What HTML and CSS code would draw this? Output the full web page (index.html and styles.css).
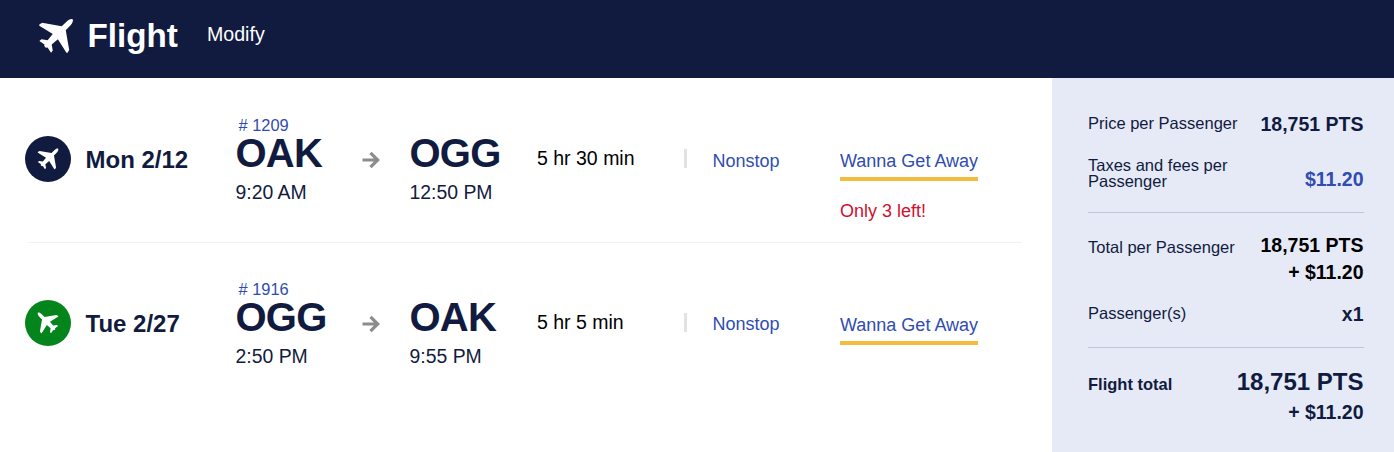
FILE: index.html
```html
<!DOCTYPE html>
<html lang="en">
<head>
    <meta charset="UTF-8">
    <meta name="viewport" content="width=device-width, initial-scale=1.0">
    <title>Flight</title>
    <link rel="stylesheet" href="styles.css">
</head>
<body>
    <svg class="defs" width="0" height="0">
        <symbol id="plane" viewBox="0 0 105 105">
            <path d="M101 4C97 1 89 5 84 10L69 24L12 14L4 19Q2 21 5 23L43 47L28 65L10 62L4 67L19 77L18 82L23 87L28 86L38 101L43 95L40 77L58 62L82 100Q84 103 86 101L91 93L81 36L95 21C100 16 104 8 101 4Z"/>
        </symbol>
        <symbol id="arrow" viewBox="0 0 18 18">
            <path d="M0.5 9H15.5M8.5 1.8L15.7 9L8.5 16.2" fill="none" stroke="#8c8c8c" stroke-width="3.2"/>
        </symbol>
    </svg>
    <header class="header">
        <svg class="header-icon"><use href="#plane"/></svg>
        <h1>Flight</h1>
        <a class="modify">Modify</a>
    </header>
    <main>
        <section class="flights">
            <div class="flight">
                <div class="badge depart"><svg><use href="#plane"/></svg></div>
                <div class="date">Mon 2/12</div>
                <div class="stop">
                    <a class="number"># 1209</a>
                    <div class="code">OAK</div>
                    <div class="time">9:20 AM</div>
                </div>
                <svg class="arrow"><use href="#arrow"/></svg>
                <div class="stop arrive">
                    <div class="code">OGG</div>
                    <div class="time">12:50 PM</div>
                </div>
                <div class="duration">5 hr 30 min</div>
                <a class="nonstop">Nonstop</a>
                <div class="fare">
                    <a class="fare-name">Wanna Get Away</a>
                    <div class="left">Only 3 left!</div>
                </div>
            </div>
            <div class="flight">
                <div class="badge return"><svg><use href="#plane"/></svg></div>
                <div class="date">Tue 2/27</div>
                <div class="stop">
                    <a class="number"># 1916</a>
                    <div class="code">OGG</div>
                    <div class="time">2:50 PM</div>
                </div>
                <svg class="arrow"><use href="#arrow"/></svg>
                <div class="stop arrive">
                    <div class="code">OAK</div>
                    <div class="time">9:55 PM</div>
                </div>
                <div class="duration">5 hr 5 min</div>
                <a class="nonstop">Nonstop</a>
                <div class="fare">
                    <a class="fare-name">Wanna Get Away</a>
                </div>
            </div>
        </section>
        <aside class="price">
            <div class="row">
                <span class="label">Price per Passenger</span>
                <span class="amount">18,751 PTS</span>
            </div>
            <div class="row taxes">
                <span class="label">Taxes and fees per Passenger</span>
                <a class="amount">$11.20</a>
            </div>
            <div class="row total">
                <span class="label">Total per Passenger</span>
                <span class="amount">18,751 PTS<br>+ $11.20</span>
            </div>
            <div class="row passengers">
                <span class="label">Passenger(s)</span>
                <span class="amount">x1</span>
            </div>
            <div class="row flight-total">
                <span class="label">Flight total</span>
                <span class="amount"><span class="big">18,751 PTS</span><br>+ $11.20</span>
            </div>
        </aside>
    </main>
</body>
</html>
```
FILE: styles.css
```css
* {
    box-sizing: border-box;
}
body {
    font-family: "Liberation Sans", Arial, sans-serif;
    margin: 0;
    background-color: #fff;
    color: #111b40;
}
.defs {
    display: block;
}
.header {
    display: flex;
    height: 78px;
    padding: 17px 38px 0;
    background-color: #111b40;
    color: #fff;
}
.header-icon {
    width: 36px;
    height: 36px;
    margin-top: 1px;
    fill: #fff;
}
.header h1 {
    margin: 0 0 0 13.5px;
    width: 119.5px;
    font-size: 33.2px;
    line-height: 38px;
}
.modify {
    font-size: 19.6px;
    line-height: 34px;
}
main {
    display: grid;
    grid-template-columns: 1052px 1fr;
    height: 374px;
}
.flights {
    padding: 0 30px 0 25px;
}
.flight {
    display: grid;
    grid-template-columns: 60.5px 150px 126.5px 47.5px 127.5px 147px 156px 1fr;
    align-items: start;
    height: 165px;
    padding-top: 37px;
    background: linear-gradient(#f2f2f2, #f2f2f2) 3px 100% / 100% 1px no-repeat;
}
.flight + .flight {
    padding-top: 36px;
    background: none;
}
.badge {
    display: flex;
    justify-content: center;
    align-items: center;
    width: 46px;
    height: 46px;
    margin-top: 21px;
    border-radius: 50%;
}
.badge svg {
    width: 22px;
    height: 22px;
    fill: #fff;
}
.depart {
    background-color: #111b40;
}
.return {
    background-color: #04851c;
}
.return svg {
    transform: scaleX(-1);
}
.date {
    margin-top: 31px;
    font-size: 24px;
    font-weight: bold;
    line-height: 28px;
}
.number {
    display: block;
    padding-left: 3px;
    font-size: 16.4px;
    line-height: 20px;
    color: #304cb2;
}
.arrive {
    padding-top: 20px;
}
.code {
    font-size: 40px;
    font-weight: bold;
    letter-spacing: -0.8px;
    line-height: 36px;
}
.time {
    margin-top: 9px;
    font-size: 19.4px;
    line-height: 24px;
}
.arrow {
    width: 18px;
    height: 18px;
    margin-top: 36px;
}
.duration {
    margin-top: 32px;
    font-size: 19.5px;
    line-height: 22px;
    color: #000;
}
.nonstop {
    margin-top: 34px;
    padding: 2px 0 0 28.5px;
    background: linear-gradient(#e2e2e2, #e2e2e2) 0 0 / 3px 19px no-repeat;
    font-size: 18px;
    line-height: 21px;
    color: #304cb2;
}
.flight + .flight .nonstop {
    padding-top: 1px;
}
.fare {
    margin-top: 36px;
    font-size: 18px;
}
.fare-name {
    display: inline-block;
    height: 30px;
    border-bottom: 4px solid #f3bc3c;
    line-height: 21px;
    color: #304cb2;
}
.left {
    margin-top: 20px;
    line-height: 21px;
    color: #d0102f;
}
.price {
    padding: 35px 30px 0 36px;
    background-color: #e6eaf7;
}
.row {
    display: flex;
    justify-content: space-between;
    line-height: 22px;
}
.label {
    font-size: 16.5px;
    line-height: 16px;
    padding-top: 2px;
}
.amount {
    margin-right: 0.5px;
    font-size: 19.5px;
    font-weight: bold;
    text-align: right;
}
.taxes {
    height: 58px;
    margin-top: 20px;
    border-bottom: 1px solid #c2c6d6;
}
.taxes .label {
    width: 160px;
}
.taxes .amount {
    padding-top: 13px;
    color: #304cb2;
}
.total {
    padding-top: 19px;
    line-height: 27px;
}
.total .label {
    padding-top: 7px;
}
.total .amount {
    color: #000;
}
.passengers {
    height: 45px;
    margin-top: 17px;
    border-bottom: 1px solid #c2c6d6;
}
.flight-total {
    padding-top: 19px;
    line-height: 29px;
}
.flight-total .label {
    padding-top: 9px;
    font-weight: bold;
}
.big {
    font-size: 24px;
}
```
